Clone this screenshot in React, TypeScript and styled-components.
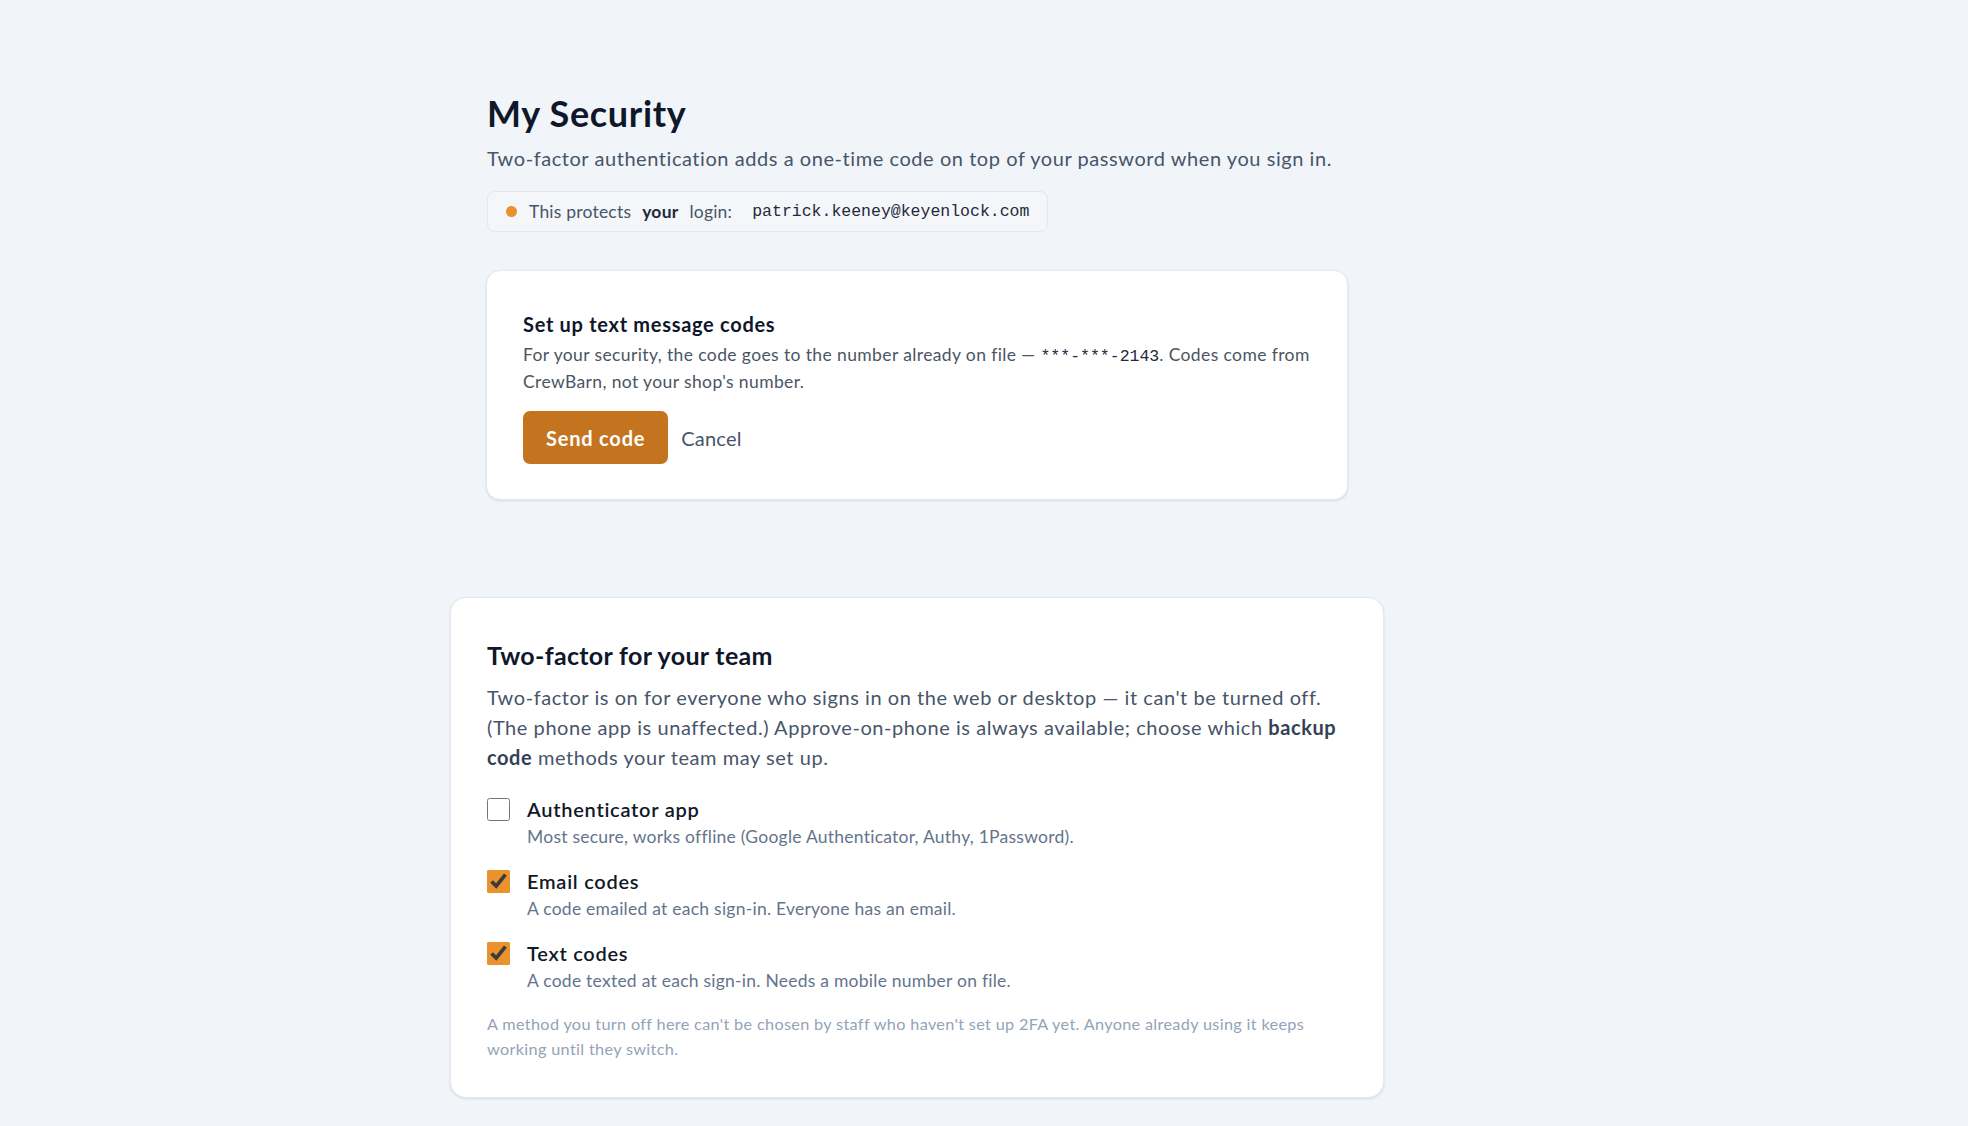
import styled, { createGlobalStyle } from "styled-components"

const GlobalStyle = createGlobalStyle`
  body {
    margin: 0;
    background: #f1f4f9;
    font-family: Lato, "Liberation Sans", sans-serif;
    color: #0f172a;
  }
`

const methods = [
  {
    id: "totp",
    label: "Authenticator app",
    hint: "Most secure, works offline (Google Authenticator, Authy, 1Password).",
    on: false,
  },
  {
    id: "email",
    label: "Email codes",
    hint: "A code emailed at each sign-in. Everyone has an email.",
    on: true,
  },
  {
    id: "sms",
    label: "Text codes",
    hint: "A code texted at each sign-in. Needs a mobile number on file.",
    on: true,
  },
]

export default function App() {
  return (
    <>
      <GlobalStyle />
      <Page>
        <Column>
          <Intro>
            <Title>My Security</Title>
            <Lead>
              Two-factor authentication adds a one-time code on top of your
              password when you sign in.
            </Lead>
            <LoginPill>
              <Dot />
              <span>This protects</span>
              <strong>your</strong>
              <span>login:</span>
              <Email>patrick.keeney@keyenlock.com</Email>
            </LoginPill>
          </Intro>

          <SetupCard>
            <CardTitle>Set up text message codes</CardTitle>
            <CardText>
              For your security, the code goes to the number already on file —{" "}
              <Mono>***-***-2143</Mono>. Codes come from CrewBarn, not your
              shop's number.
            </CardText>
            <Actions>
              <PrimaryButton type="button">Send code</PrimaryButton>
              <LinkButton type="button">Cancel</LinkButton>
            </Actions>
          </SetupCard>

          <TeamCard>
            <TeamTitle>Two-factor for your team</TeamTitle>
            <TeamText>
              Two-factor is on for everyone who signs in on the web or desktop —
              it can't be turned off. (The phone app is unaffected.)
              Approve-on-phone is always available; choose which{" "}
              <b>backup code</b> methods your team may set up.
            </TeamText>
            <MethodList>
              {methods.map((m) => (
                <Method key={m.id}>
                  <Check type="checkbox" defaultChecked={m.on} />
                  <div>
                    <MethodName>{m.label}</MethodName>
                    <MethodHint>{m.hint}</MethodHint>
                  </div>
                </Method>
              ))}
            </MethodList>
            <Footnote>
              A method you turn off here can't be chosen by staff who haven't
              set up 2FA yet. Anyone already using it keeps working until they
              switch.
            </Footnote>
          </TeamCard>
        </Column>
      </Page>
    </>
  )
}

const Page = styled.main`
  padding: 91px 0 28px 450px;
`

const Column = styled.div`
  width: 934px;
  display: flex;
  flex-direction: column;
`

const Intro = styled.section`
  padding: 0 37px;
  display: flex;
  flex-direction: column;
  align-items: flex-start;
`

const Title = styled.h1`
  margin: 0;
  font-size: 36px;
  line-height: 44px;
  font-weight: 700;
  letter-spacing: 0.019em;
  color: #0f172a;
`

const Lead = styled.p`
  margin: 8px 0 0;
  font-size: 20px;
  line-height: 30px;
  letter-spacing: 0.028em;
  color: #475569;
`

const LoginPill = styled.div`
  margin-top: 18px;
  height: 41px;
  box-sizing: border-box;
  display: inline-flex;
  align-items: center;
  gap: 11px;
  padding: 0 18px;
  background: #f4f6fa;
  border: 1px solid #e2e8f0;
  border-radius: 8px;
  font-size: 17.5px;
  letter-spacing: 0.012em;
  color: #475569;

  strong {
    color: #1e293b;
    font-weight: 700;
  }
`

const Dot = styled.span`
  width: 11px;
  height: 11px;
  border-radius: 50%;
  background: #e8912d;
  margin-right: 1px;
`

const Email = styled.code`
  margin-left: 9px;
  font-family: "Liberation Mono", "DejaVu Sans Mono", monospace;
  font-size: 16.5px;
  letter-spacing: 0;
  color: #1e293b;
`

const Card = styled.section`
  background: #fff;
  border: 1px solid #e5e9f0;
  border-radius: 14px;
  box-shadow: 0 1px 3px rgba(15, 23, 42, 0.08), 0 1px 2px rgba(15, 23, 42, 0.04);
`

const SetupCard = styled(Card)`
  margin: 38px 36px 0;
  padding: 39px 36px 35px;
`

const CardTitle = styled.h2`
  margin: 0;
  font-size: 20px;
  line-height: 28px;
  font-weight: 700;
  letter-spacing: 0.035em;
  color: #0f172a;
`

const CardText = styled.p`
  margin: 4px 0 0;
  font-size: 17.5px;
  line-height: 25px;
  letter-spacing: 0.022em;
  color: #4b5563;
`

const Mono = styled.code`
  font-family: "Liberation Mono", "DejaVu Sans Mono", monospace;
  font-size: 16.5px;
  letter-spacing: 0;
  color: #1e293b;
`

const Actions = styled.div`
  margin-top: 17px;
  display: flex;
  align-items: center;
  gap: 13px;
`

const PrimaryButton = styled.button`
  height: 53px;
  padding: 0 23px;
  border: none;
  border-radius: 7px;
  background: #c4741e;
  color: #fff;
  font-family: inherit;
  font-size: 20px;
  font-weight: 700;
  letter-spacing: 0.04em;
  cursor: pointer;
`

const LinkButton = styled.button`
  padding: 0;
  border: none;
  background: none;
  color: #475569;
  font-family: inherit;
  font-size: 20px;
  letter-spacing: 0.01em;
  cursor: pointer;
`

const TeamCard = styled(Card)`
  margin-top: 97px;
  padding: 41px 36px 36px;
  border-radius: 16px;
`

const TeamTitle = styled.h2`
  margin: 0;
  font-size: 25px;
  line-height: 32px;
  font-weight: 700;
  letter-spacing: 0.013em;
  color: #0f172a;
`

const TeamText = styled.p`
  margin: 11px 0 0;
  font-size: 20px;
  line-height: 30px;
  letter-spacing: 0.028em;
  color: #475569;

  b {
    color: #334155;
    font-weight: 700;
  }
`

const MethodList = styled.div`
  margin-top: 25px;
  display: flex;
  flex-direction: column;
  gap: 20px;
`

const Method = styled.label`
  display: flex;
  align-items: flex-start;
  gap: 17px;
  cursor: pointer;
`

const Check = styled.input`
  width: 23px;
  height: 23px;
  margin: 1px 0 0;
  accent-color: #ea922e;
  flex: none;
`

const MethodName = styled.div`
  font-size: 20px;
  line-height: 25px;
  font-weight: 600;
  letter-spacing: 0.037em;
  color: #111827;
`

const MethodHint = styled.div`
  margin-top: 2px;
  font-size: 17.5px;
  line-height: 25px;
  letter-spacing: 0.014em;
  color: #64748b;
`

const Footnote = styled.p`
  margin: 18px 0 0;
  font-size: 16.25px;
  line-height: 25px;
  letter-spacing: 0.02em;
  color: #94a3b8;
`
